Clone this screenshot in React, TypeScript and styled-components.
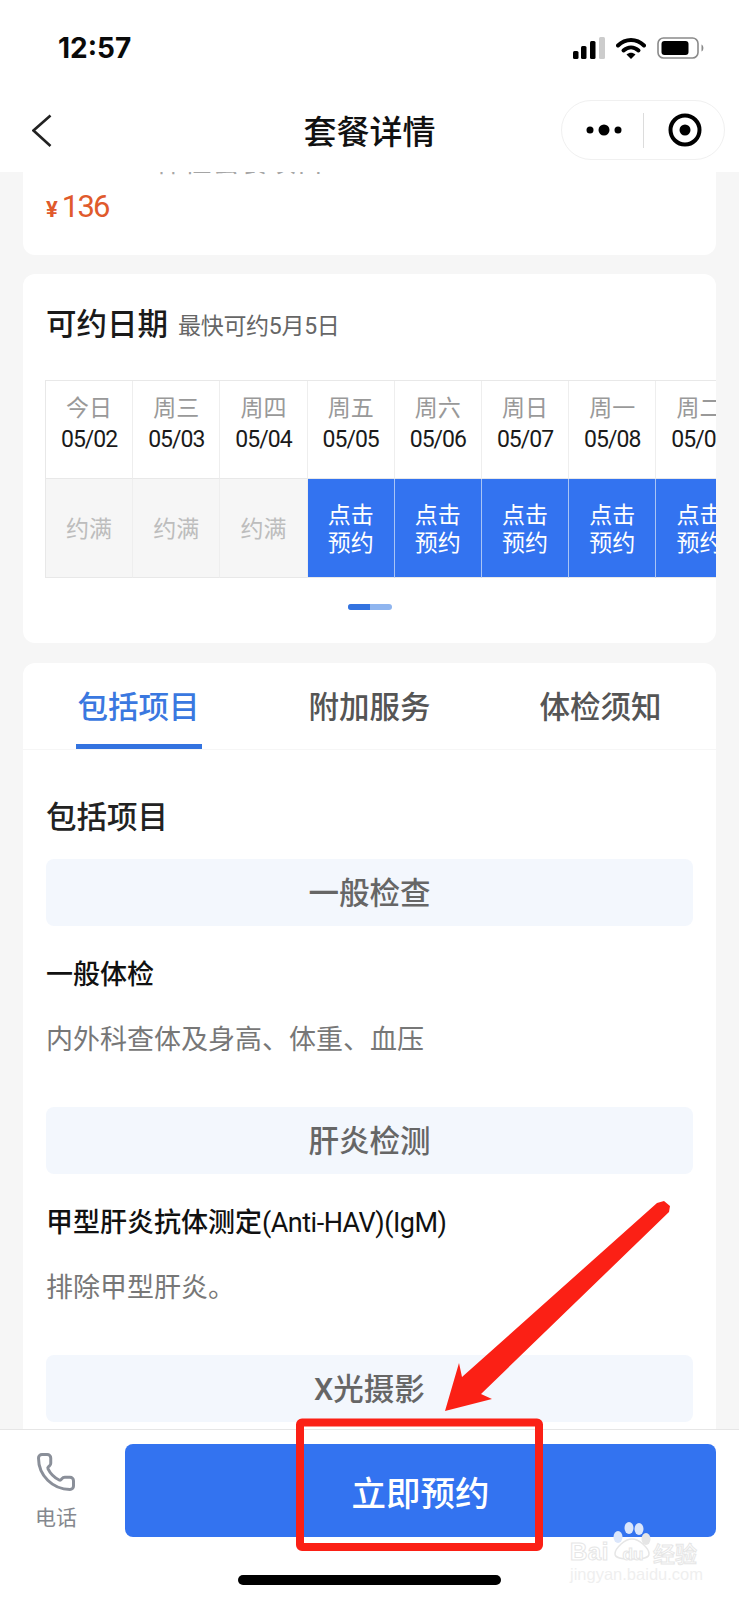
import React from "react";
import styled, { createGlobalStyle } from "styled-components";
import { Phone } from "lucide-react";

const Global = createGlobalStyle`
  html, body { margin: 0; padding: 0; background: #f6f6f6; }
  * { box-sizing: border-box; }
`;

const Page = styled.div`
  position: relative;
  width: 739px;
  height: 1600px;
  overflow: hidden;
  display: flex;
  flex-direction: column;
  background: #f6f6f6;
  font-family: Roboto, "Noto Sans CJK SC", sans-serif;
`;

const Header = styled.header`
  position: relative;
  z-index: 1;
  flex: none;
  height: 172px;
  background: #fff;
`;
const StatusRow = styled.div`
  height: 95px;
  padding: 0 34px 0 58px;
  display: flex;
  align-items: center;
  justify-content: space-between;
`;
const Time = styled.span`
  font-family: Inter, sans-serif;
  font-weight: 700;
  font-size: 28px;
  color: #0a0a0a;
`;
const StatusIcons = styled.div`
  display: flex;
  align-items: center;
  gap: 11px;
`;
const NavRow = styled.div`
  margin-top: 5px;
  height: 60px;
  padding: 0 14px;
  display: grid;
  grid-template-columns: 1fr auto 1fr;
  align-items: center;
`;
const BackButton = styled.div`
  padding-left: 18px;
  display: flex;
  align-items: center;
`;
const Title = styled.h1`
  margin: 0;
  font-size: 33px;
  font-weight: 500;
  color: #111;
`;
const Capsule = styled.div`
  justify-self: end;
  width: 164px;
  height: 60px;
  border: 1px solid #f0f0f0;
  border-radius: 30px;
  background: #fff;
  display: flex;
  align-items: center;
  padding-left: 24px;
`;
const CapsuleDivider = styled.div`
  width: 1px;
  height: 35px;
  background: #dcdcdc;
  margin: 0 24px 0 21px;
`;

const Main = styled.main`
  flex: 1;
  min-height: 0;
  overflow: hidden;
  padding: 0 23px;
  display: flex;
  flex-direction: column;
`;
const PriceCard = styled.section`
  flex: none;
  height: 83px;
  background: #fff;
  border-radius: 0 0 12px 12px;
  overflow: hidden;
  padding-left: 23px;
`;
const ClippedLine = styled.div`
  margin: -22px 0 0 110px;
  height: 25px;
  line-height: 25px;
  font-size: 28px;
  color: #a5a5a5;
  white-space: nowrap;
`;
const Price = styled.div`
  margin-top: 13px;
  display: flex;
  align-items: baseline;
  gap: 4px;
  color: #e05a2c;
`;
const Yen = styled.span`
  font-size: 22px;
  font-weight: 700;
`;
const Amount = styled.span`
  font-size: 31px;
  letter-spacing: -1.8px;
`;

const DateCard = styled.section`
  flex: none;
  margin-top: 19px;
  height: 369px;
  background: #fff;
  border-radius: 12px;
  padding: 24px 0 0 23px;
`;
const DateHeading = styled.div`
  height: 48px;
  display: flex;
  align-items: center;
  gap: 10px;
`;
const DateTitle = styled.h2`
  margin: 0;
  font-size: 30.5px;
  font-weight: 500;
  color: #1a1a1a;
`;
const DateHint = styled.span`
  font-size: 23px;
  color: #666;
  letter-spacing: -0.3px;
  margin-top: 4px;
`;
const DateTable = styled.div`
  margin: 34px 0 0 -1px;
  height: 198px;
  display: flex;
  overflow: hidden;
  border-top: 1px solid #e8e8e8;
  border-left: 1px solid #e8e8e8;
`;
const DayColumn = styled.div`
  flex: none;
  width: 87.2px;
  display: flex;
  flex-direction: column;
`;
const DayHead = styled.div`
  height: 98px;
  padding-top: 12px;
  border-right: 1px solid #eeeeee;
  border-bottom: 1px solid #e8e8e8;
  text-align: center;
`;
const WeekName = styled.div`
  font-size: 23px;
  line-height: 32px;
  color: #999;
`;
const DayDate = styled.div`
  font-size: 23px;
  line-height: 30px;
  letter-spacing: -1px;
  color: #1a1a1a;
`;
const DaySlot = styled.div<{ $open: boolean }>`
  flex: 1;
  display: flex;
  align-items: center;
  justify-content: center;
  text-align: center;
  font-size: 23px;
  line-height: 28px;
  padding: 4px 20px 0;
  background: ${(p) => (p.$open ? "#3373f0" : "#f6f6f6")};
  color: ${(p) => (p.$open ? "#fff" : "#bdbdbd")};
  border-right: 1px solid ${(p) => (p.$open ? "#a9c4f5" : "#eeeeee")};
  border-bottom: 1px solid #e8e8e8;
`;
const Indicator = styled.div`
  margin: 26px auto 0;
  transform: translateX(-11px);
  width: 44px;
  height: 6px;
  border-radius: 3px;
  background: #8fb5ef;
  overflow: hidden;
`;
const IndicatorThumb = styled.div`
  width: 22px;
  height: 100%;
  background: #3373e0;
`;

const DetailCard = styled.section`
  flex: none;
  margin-top: 20px;
  background: #fff;
  border-radius: 12px 12px 0 0;
  padding-bottom: 40px;
`;
const Tabs = styled.nav`
  display: flex;
  border-bottom: 1px solid #f6f6f6;
`;
const Tab = styled.div`
  flex: 1;
  display: flex;
  justify-content: center;
`;
const TabLabel = styled.div<{ $active?: boolean }>`
  width: 126px;
  padding: 27px 0 18px;
  display: flex;
  justify-content: center;
  font-size: 30.5px;
  line-height: 36px;
  font-weight: 500;
  white-space: nowrap;
  color: ${(p) => (p.$active ? "#3a78e0" : "#555")};
  border-bottom: 5px solid ${(p) => (p.$active ? "#3373e0" : "transparent")};
`;
const DetailBody = styled.div`
  padding: 48px 23px 0;
`;
const SectionTitle = styled.h3`
  margin: 0 0 21px;
  font-size: 30.5px;
  line-height: 40px;
  font-weight: 500;
  color: #222;
`;
const Group = styled.div`
  margin-bottom: 47px;
`;
const GroupBanner = styled.div`
  height: 67px;
  padding-bottom: 4px;
  border-radius: 8px;
  background: #f3f7fd;
  display: flex;
  align-items: center;
  justify-content: center;
  font-size: 30.5px;
  font-weight: 500;
  color: #666;
`;
const ItemName = styled.div`
  margin-top: 29px;
  font-size: 27px;
  line-height: 40px;
  font-weight: 500;
  color: #111;
`;
const ItemLatin = styled.span`
  font-weight: 400;
  letter-spacing: -0.5px;
`;
const ItemDesc = styled.div`
  margin-top: 25px;
  font-size: 27px;
  line-height: 40px;
  color: #777;
`;

const Footer = styled.footer`
  position: relative;
  flex: none;
  height: 171px;
  background: #fff;
  border-top: 1px solid #e6e6e6;
  padding-top: 14px;
  display: flex;
  flex-direction: column;
`;
const FooterRow = styled.div`
  display: flex;
  height: 93px;
`;
const CallAction = styled.div`
  flex: none;
  width: 112px;
  margin-right: 13px;
  padding-top: 7px;
  display: flex;
  flex-direction: column;
  align-items: center;
  color: #8a8f99;
`;
const CallLabel = styled.span`
  margin-top: 11px;
  font-size: 21px;
  line-height: 28px;
  color: #85888e;
`;
const BookButton = styled.button`
  flex: none;
  width: 591px;
  height: 93px;
  border: 0;
  border-radius: 8px;
  background: #3373f0;
  color: #fff;
  font: 500 34.5px Roboto, "Noto Sans CJK SC", sans-serif;
`;
const HomeBar = styled.div`
  margin: 38px auto 0;
  width: 263px;
  height: 10px;
  border-radius: 5px;
  background: #000;
`;

const Annotation = styled.svg`
  position: absolute;
  z-index: 2;
  inset: 0;
  pointer-events: none;
`;
const Watermark = styled.div`
  position: absolute;
  z-index: 3;
  left: 570px;
  top: 1520px;
  width: 132px;
  height: 62px;
  pointer-events: none;
`;
const WatermarkRow = styled.div`
  position: absolute;
  left: 0;
  top: 20px;
  display: flex;
  align-items: center;
  height: 24px;
`;
const WatermarkBai = styled.span`
  font: 700 24px "Liberation Sans", sans-serif;
  color: #fff;
  -webkit-text-stroke: 1px #e6e6e6;
  width: 43px;
  letter-spacing: 0.5px;
`;
const WatermarkDu = styled.span`
  position: relative;
  font: 700 17px "Liberation Sans", sans-serif;
  color: #fff;
  -webkit-text-stroke: 1px #e6e6e6;
  width: 40px;
  text-align: center;
  margin-top: 5px;
`;
const WatermarkCn = styled.span`
  font: 500 22px "Noto Sans CJK SC", sans-serif;
  color: #fff;
  -webkit-text-stroke: 1px #e6e6e6;
  white-space: nowrap;
`;
const WatermarkUrl = styled.span`
  position: absolute;
  left: 0;
  top: 45px;
  font: 400 16.5px "Liberation Sans", sans-serif;
  color: #efefef;
  white-space: nowrap;
`;
const PawIcon = styled.svg`
  position: absolute;
  left: 41px;
  top: 2px;
`;

const Signal = () => (
  <svg width="32" height="22" viewBox="0 0 32 22">
    <rect x="0" y="14" width="5.5" height="8" rx="1.5" fill="#000" />
    <rect x="8" y="9" width="5.5" height="13" rx="1.5" fill="#000" />
    <rect x="17" y="4" width="5.5" height="18" rx="1.5" fill="#000" />
    <rect x="26" y="0" width="6" height="22" rx="1.5" fill="#ccc" />
  </svg>
);
const Wifi = () => (
  <svg width="30" height="22" viewBox="0 0 30 22" fill="none">
    <path d="M2 8.5C9.5 1.2 20.5 1.2 28 8.5" stroke="#000" strokeWidth="4" strokeLinecap="round" />
    <path d="M7.5 13.5C12 9.5 18 9.5 22.5 13.5" stroke="#000" strokeWidth="4" strokeLinecap="round" />
    <path d="M10.5 17.5C13.5 15 16.5 15 19.5 17.5L15 22Z" fill="#000" />
  </svg>
);
const Battery = () => (
  <svg width="48" height="22" viewBox="0 0 48 22" fill="none">
    <rect x="1" y="1" width="40" height="20" rx="5.5" stroke="#8a8a8a" strokeWidth="1.6" />
    <rect x="4.5" y="4" width="27" height="14" rx="3" fill="#000" />
    <path d="M44.5 7.5C47 8.5 47 13.5 44.5 14.5Z" fill="#8a8a8a" />
  </svg>
);
const Chevron = () => (
  <svg width="20" height="33" viewBox="0 0 20 33" fill="none">
    <path d="M18.5 1.5L1.5 16.5L18.5 32" stroke="#222" strokeWidth="2.6" />
  </svg>
);
const MoreDots = () => (
  <svg width="36" height="12" viewBox="0 0 36 12">
    <circle cx="4" cy="6" r="3.5" fill="#000" />
    <circle cx="18" cy="6" r="5.5" fill="#000" />
    <circle cx="32" cy="6" r="3.5" fill="#000" />
  </svg>
);
const Target = () => (
  <svg width="34" height="34" viewBox="0 0 34 34" fill="none">
    <circle cx="17" cy="17" r="14.5" stroke="#000" strokeWidth="4" />
    <circle cx="17" cy="17" r="5.5" fill="#000" />
  </svg>
);

const days = [
  ["今日", "05/02", false],
  ["周三", "05/03", false],
  ["周四", "05/04", false],
  ["周五", "05/05", true],
  ["周六", "05/06", true],
  ["周日", "05/07", true],
  ["周一", "05/08", true],
  ["周二", "05/09", true],
] as const;

export default function App() {
  return (
    <Page>
      <Global />
      <Header>
        <StatusRow>
          <Time>12:57</Time>
          <StatusIcons>
            <Signal />
            <Wifi />
            <Battery />
          </StatusIcons>
        </StatusRow>
        <NavRow>
          <BackButton>
            <Chevron />
          </BackButton>
          <Title>套餐详情</Title>
          <Capsule>
            <MoreDots />
            <CapsuleDivider />
            <Target />
          </Capsule>
        </NavRow>
      </Header>
      <Main>
        <PriceCard>
          <ClippedLine>体检套餐项目</ClippedLine>
          <Price>
            <Yen>¥</Yen>
            <Amount>136</Amount>
          </Price>
        </PriceCard>
        <DateCard>
          <DateHeading>
            <DateTitle>可约日期</DateTitle>
            <DateHint>最快可约5月5日</DateHint>
          </DateHeading>
          <DateTable>
            {days.map(([week, date, open]) => (
              <DayColumn key={date}>
                <DayHead>
                  <WeekName>{week}</WeekName>
                  <DayDate>{date}</DayDate>
                </DayHead>
                <DaySlot $open={open}>{open ? "点击预约" : "约满"}</DaySlot>
              </DayColumn>
            ))}
          </DateTable>
          <Indicator>
            <IndicatorThumb />
          </Indicator>
        </DateCard>
        <DetailCard>
          <Tabs>
            <Tab><TabLabel $active>包括项目</TabLabel></Tab>
            <Tab><TabLabel>附加服务</TabLabel></Tab>
            <Tab><TabLabel>体检须知</TabLabel></Tab>
          </Tabs>
          <DetailBody>
            <SectionTitle>包括项目</SectionTitle>
            <Group>
              <GroupBanner>一般检查</GroupBanner>
              <ItemName>一般体检</ItemName>
              <ItemDesc>内外科查体及身高、体重、血压</ItemDesc>
            </Group>
            <Group>
              <GroupBanner>肝炎检测</GroupBanner>
              <ItemName>甲型肝炎抗体测定<ItemLatin>(Anti-HAV)(IgM)</ItemLatin></ItemName>
              <ItemDesc>排除甲型肝炎。</ItemDesc>
            </Group>
            <Group>
              <GroupBanner>X光摄影</GroupBanner>
            </Group>
          </DetailBody>
        </DetailCard>
      </Main>
      <Footer>
        <FooterRow>
          <CallAction>
            <Phone size={42} strokeWidth={1.7} />
            <CallLabel>电话</CallLabel>
          </CallAction>
          <BookButton>立即预约</BookButton>
        </FooterRow>
        <HomeBar />
      </Footer>
      <Annotation width="739" height="1600" viewBox="0 0 739 1600" fill="none">
        <polygon
          points="445,1411 459,1363 462,1377 657,1203 664,1201 670,1206 669,1212 481,1394 492,1399"
          fill="#fb2015"
        />
        <rect x="300" y="1422.5" width="239" height="124.5" rx="2" stroke="#fb2015" strokeWidth="8" />
      </Annotation>
      <Watermark>
        <PawIcon width="42" height="38" viewBox="0 0 42 38" fill="none">
          <ellipse cx="18" cy="6" rx="4.5" ry="6" fill="#dbe6fb" />
          <ellipse cx="28" cy="7" rx="4.5" ry="6" fill="#dbe6fb" />
          <ellipse cx="7" cy="15" rx="4.5" ry="6" fill="#dbe6fb" />
          <ellipse cx="35" cy="17" rx="4.5" ry="6" fill="#e6e6e6" />
          <path d="M21 17C14 17 4 26 4 32C4 36 10 37 21 37C32 37 38 36 38 32C38 26 28 17 21 17Z" stroke="#e6e6e6" strokeWidth="1.5" fill="#fff" />
        </PawIcon>
        <WatermarkRow>
          <WatermarkBai>Bai</WatermarkBai>
          <WatermarkDu>du</WatermarkDu>
          <WatermarkCn>经验</WatermarkCn>
        </WatermarkRow>
        <WatermarkUrl>jingyan.baidu.com</WatermarkUrl>
      </Watermark>
    </Page>
  );
}
